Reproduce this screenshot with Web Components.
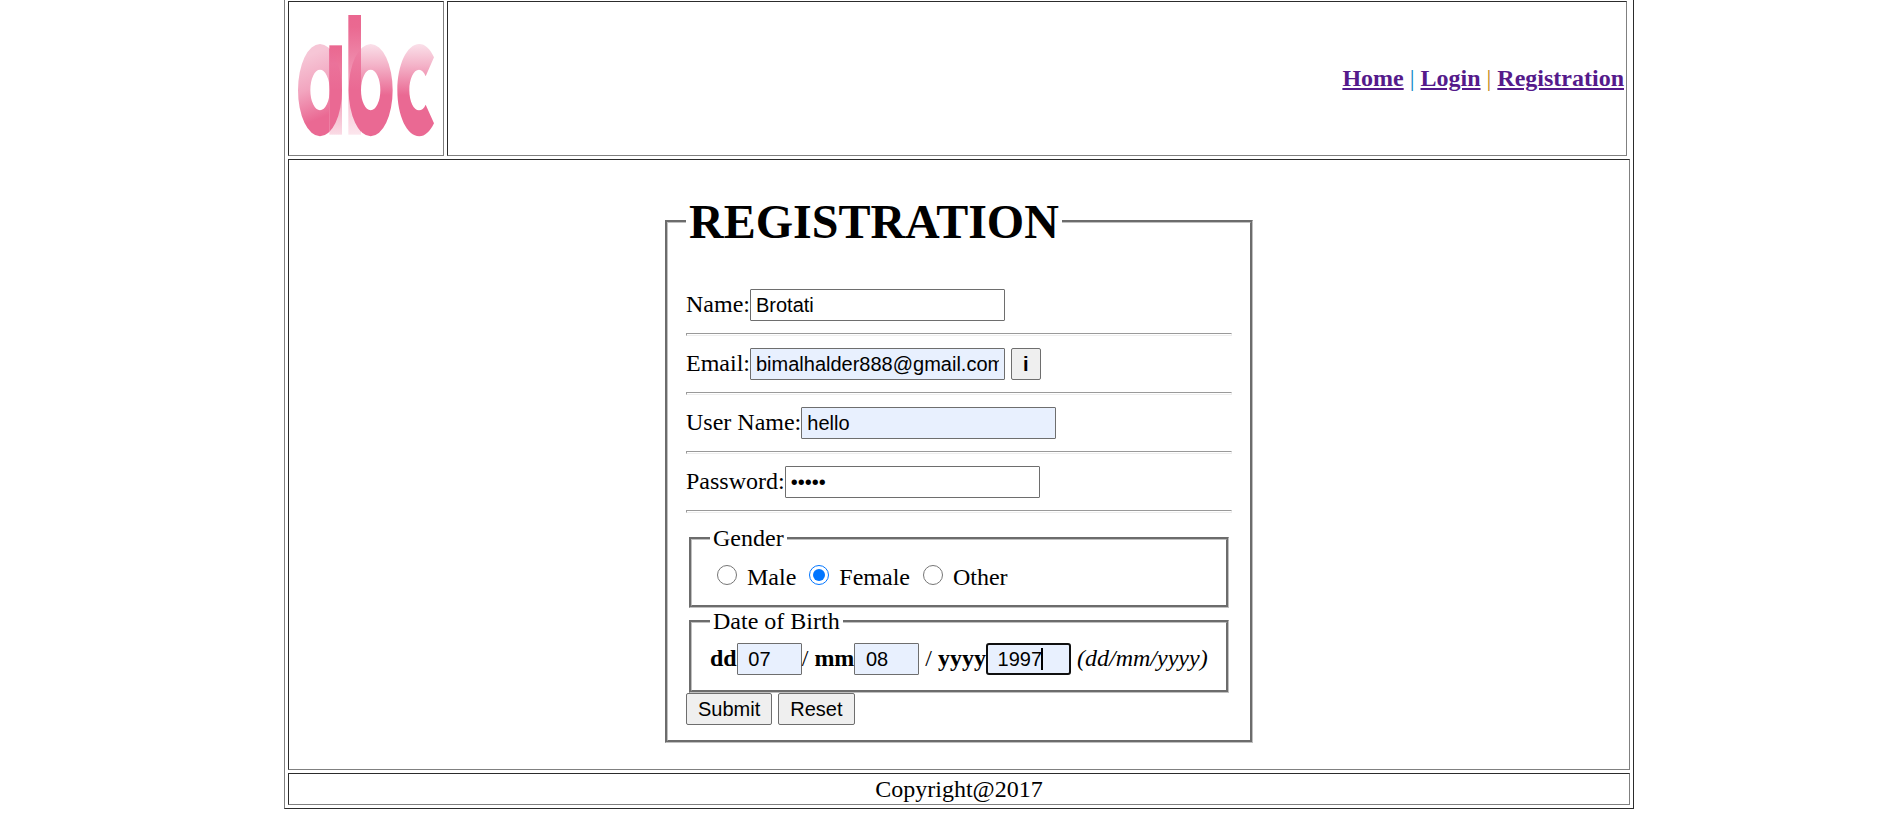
<!DOCTYPE html>
<html lang="en">
<head>
<meta charset="utf-8">
<title>Registration</title>
<style>
body { margin: 0; padding-left: 25px; background: #fff; color: #000; font-family: "Liberation Serif", "Times New Roman", serif; font-size: 24px; line-height: 27px; }
</style>
</head>
<body>
<page-frame>
  <site-header slot="header"></site-header>
  <registration-form></registration-form>
  <span slot="footer">Copyright@2017</span>
</page-frame>
<script>
const define = (name, html) => {
  const template = document.createElement('template');
  template.innerHTML = html;
  customElements.define(name, class extends HTMLElement {
    constructor() {
      super();
      this.attachShadow({ mode: 'open' }).append(template.content.cloneNode(true));
    }
  });
};

const controls = `
  input:not([type=radio]), button { box-sizing: border-box; height: 32px; margin: 0; border: 1px solid #6e6e6e; font-family: "Liberation Sans", Arial, sans-serif; font-size: 20px; line-height: 23px; color: #000; }
  input:not([type=radio]) { width: 255px; padding: 2px 5px; border-radius: 1px; background: #fff; outline: 0; }
  input.filled { background: #e8f0fe; }
  button { padding: 0 11px; border-radius: 2px; background: #efefef; }
`;

define('page-frame', `
  <style>
    :host { display: flex; flex-direction: column; gap: 3px; box-sizing: border-box; max-width: 1350px; margin: 0 auto; padding: 1px 3px 3px; border: 1px outset gray; border-top: 0; }
    main, footer { border: 1px inset gray; }
    main { display: flex; justify-content: center; padding: 2px 2px 26px; }
    footer { padding: 1px; text-align: center; line-height: 28px; }
  </style>
  <slot name="header"></slot>
  <main><slot></slot></main>
  <footer><slot name="footer"></slot></footer>`);

define('brand-logo', `
  <style>:host { display: block; width: 151px; height: 151px; } svg { display: block; width: 100%; height: 100%; }</style>
  <svg viewBox="60 9 453 453" role="img" aria-label="abc">
    <defs>
      <linearGradient id="diag" gradientUnits="userSpaceOnUse" x1="105" y1="170" x2="175" y2="345">
        <stop offset="0" stop-color="#f6c6d6"/><stop offset="0.5" stop-color="#f2a5bf"/><stop offset="1" stop-color="#ea6993"/>
      </linearGradient>
      <linearGradient id="bowl" gradientUnits="userSpaceOnUse" x1="0" y1="132" x2="0" y2="285">
        <stop offset="0" stop-color="#fae0e9"/><stop offset="0.4" stop-color="#f4b5ca"/><stop offset="1" stop-color="#ea6993"/>
      </linearGradient>
      <linearGradient id="stemA" gradientUnits="userSpaceOnUse" x1="0" y1="136" x2="0" y2="404">
        <stop offset="0" stop-color="#ea6790"/><stop offset="0.35" stop-color="#ed7ba0"/><stop offset="0.75" stop-color="#f5b9cc"/><stop offset="1" stop-color="#fadbe5"/>
      </linearGradient>
      <linearGradient id="stemB" gradientUnits="userSpaceOnUse" x1="0" y1="45" x2="0" y2="404">
        <stop offset="0" stop-color="#ea6790"/><stop offset="0.1" stop-color="#ea6991"/><stop offset="0.45" stop-color="#f090b0"/><stop offset="0.8" stop-color="#f8cfdc"/><stop offset="1" stop-color="#fce6ed"/>
      </linearGradient>
      <linearGradient id="overA" gradientUnits="userSpaceOnUse" x1="0" y1="140" x2="0" y2="270">
        <stop offset="0" stop-color="#ea6891"/><stop offset="0.4" stop-color="#eb729a"/><stop offset="1" stop-color="#ea6993"/>
      </linearGradient>
      <linearGradient id="overB" gradientUnits="userSpaceOnUse" x1="0" y1="150" x2="0" y2="270">
        <stop offset="0" stop-color="#ed7ea2"/><stop offset="1" stop-color="#ea6993"/>
      </linearGradient>
      <clipPath id="clipA"><rect x="178" y="136" width="38" height="274"/></clipPath>
      <clipPath id="clipB"><rect x="235" y="132" width="38" height="278"/></clipPath>
      <path id="ring" fill-rule="evenodd" d="M0 132A66 138.5 0 0 1 0 409A66 138.5 0 0 1 0 132ZM0 209A29 61 0 0 0 0 331A29 61 0 0 0 0 209Z"/>
    </defs>
    <path fill="url(#diag)" fill-rule="evenodd" d="M150 132A66 138.5 0 0 1 150 409A66 138.5 0 0 1 150 132ZM150 209A29 61 0 0 0 150 331A29 61 0 0 0 150 209Z"/>
    <rect x="178" y="136" width="38" height="268" fill="url(#stemA)"/>
    <g clip-path="url(#clipA)"><use href="#ring" x="150" fill="url(#overA)"/></g>
    <use href="#ring" x="302" fill="url(#bowl)"/>
    <rect x="235" y="45" width="38" height="359" fill="url(#stemB)"/>
    <g clip-path="url(#clipB)"><use href="#ring" x="302" fill="url(#overB)"/></g>
    <path fill="url(#bowl)" d="M492 172C480 146 465 132 448 132C411 132 382 194 382 271C382 348 411 409 448 409C465 409 480 395 492 370L467 314C462 325 455 331 447 331C431 331 418 304 418 270C418 236 431 209 447 209C455 209 462 216 467 229Z"/>
  </svg>`);

define('site-header', `
  <style>
    :host { display: flex; gap: 3px; margin-right: 3px; }
    .logo, nav { border: 1px inset gray; }
    .logo { padding: 1px 2px 1px 1px; }
    nav { flex: 1; display: flex; align-items: center; justify-content: flex-end; gap: 6px; padding: 0 2px; }
    a { color: #551a8b; font-weight: bold; }
    .a { color: #0a84c4; } .b { color: #c08410; }
  </style>
  <div class="logo"><brand-logo></brand-logo></div>
  <nav><a href="#home">Home</a><span class="a">|</span><a href="#login">Login</a><span class="b">|</span><a href="#registration">Registration</a></nav>`);

define('registration-form', `
  <style>${controls}
    :host { display: block; width: 588px; max-width: 100%; }
    fieldset { box-sizing: border-box; min-width: 0; margin: 0; padding: 8px 18px 15px; border: 3px groove #c0c0c0; }
    fieldset fieldset { margin: 0 3px; }
    legend { padding: 0 3px; }
    h1 { margin: 32px 0; font-size: 48px; line-height: 55px; }
    .row { display: flex; align-items: baseline; height: 32px; white-space: pre; }
    .row button { margin-left: 6px; font-weight: bold; }
    hr { margin: 12px 0; border: 1px solid; border-color: #9a9a9a #eee #eee #9a9a9a; height: 1px; }
    .choices { display: flex; align-items: baseline; height: 30px; }
    input[type=radio] { width: 20px; height: 20px; margin: 5px 10px 0 7px; }
    .choices label { margin-right: 6px; }
    .date label { font-weight: bold; }
    .row input.short { width: 65px; }
    .row input.year { width: 85px; padding: 1px 4px; border: 2px solid #101010; border-radius: 3px; }
    .year-box { position: relative; margin-right: 6px; }
    .caret { position: absolute; left: 55px; top: 5px; width: 2px; height: 22px; background: #000; }
    .actions { display: flex; gap: 6px; }
  </style>
  <form>
    <fieldset>
      <legend><h1>REGISTRATION</h1></legend>
      <div class="row"><label for="name">Name:</label><input id="name" type="text" value="Brotati"></div>
      <hr>
      <div class="row"><label for="email">Email:</label><input id="email" class="filled" type="text" value="bimalhalder888@gmail.com"><button type="button">i</button></div>
      <hr>
      <div class="row"><label for="user">User Name:</label><input id="user" class="filled" type="text" value="hello"></div>
      <hr>
      <div class="row"><label for="password">Password:</label><input id="password" type="password" value="hello"></div>
      <hr>
      <fieldset>
        <legend>Gender</legend>
        <div class="choices">
          <input type="radio" name="gender" id="male"><label for="male">Male</label>
          <input type="radio" name="gender" id="female" checked><label for="female">Female</label>
          <input type="radio" name="gender" id="other"><label for="other">Other</label>
        </div>
      </fieldset>
      <fieldset>
        <legend>Date of Birth</legend>
        <div class="row date"><label for="dd">dd</label><input id="dd" class="filled short" type="text" value=" 07"><span>/ </span><label for="mm">mm</label><input id="mm" class="filled short" type="text" value=" 08"><span> / </span><label for="yyyy">yyyy</label><span class="year-box"><input id="yyyy" class="filled year" type="text" value=" 1997"><span class="caret"></span></span><i>(dd/mm/yyyy)</i></div>
      </fieldset>
      <div class="actions"><button type="submit">Submit</button><button type="reset">Reset</button></div>
    </fieldset>
  </form>`);
</script>
</body>
</html>
